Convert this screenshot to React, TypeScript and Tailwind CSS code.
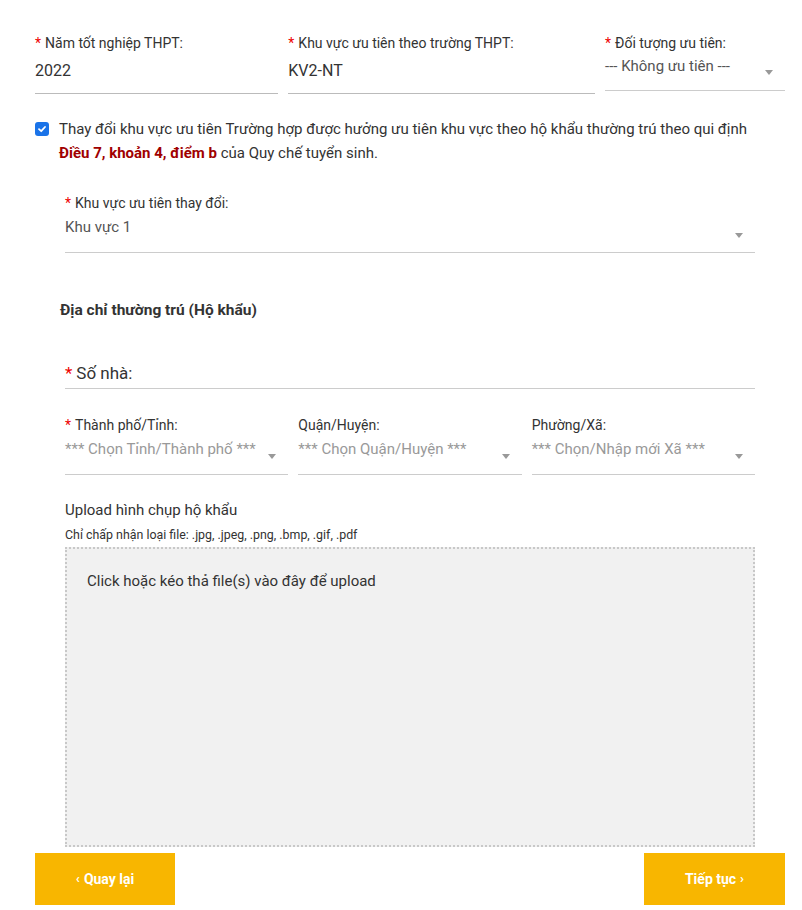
import React from "react";

const Caret = ({ className = "" }: { className?: string }) => (
  <span
    className={`absolute w-0 h-0 border-l-[4px] border-r-[4px] border-t-[5px] border-l-transparent border-r-transparent border-t-[#999] ${className}`}
  />
);

const Req = () => <span className="text-[#e00] mr-[4px]">*</span>;

export default function App() {
  return (
    <div
      className="w-full h-screen overflow-hidden bg-white text-[#333]"
      style={{ fontFamily: "Roboto, 'Noto Sans', sans-serif" }}
    >
      <div className="pl-[30px] pr-[12px] pt-[33px]">
        {/* Row 1 */}
        <div className="flex">
          <div className="w-4/12 px-[5px]">
            <div className="text-[14px] leading-[20px] text-[#333]">
              <Req />Năm tốt nghiệp THPT:
            </div>
            <div className="h-[41px] border-b border-[#bbb] pt-[6px] text-[16px] leading-[24px] text-[#333]">
              2022
            </div>
          </div>
          <div className="w-5/12 px-[5px]">
            <div className="text-[14px] leading-[20px] text-[#333]">
              <Req />Khu vực ưu tiên theo trường THPT:
            </div>
            <div className="h-[41px] border-b border-[#bbb] pt-[6px] text-[16px] leading-[24px] text-[#333]">
              KV2-NT
            </div>
          </div>
          <div className="w-3/12 px-[5px]">
            <div className="text-[14px] leading-[20px] text-[#333]">
              <Req />Đối tượng ưu tiên:
            </div>
            <div className="relative h-[38px] border-b border-[#ccc] pt-[1px] text-[15px] leading-[24px] text-[#555]">
              --- Không ưu tiên ---
              <Caret className="right-[12px] top-[17px]" />
            </div>
          </div>
        </div>

        {/* Checkbox */}
        <div className="flex px-[5px] mt-[23px]">
          <div className="mt-[5px] w-[14px] h-[14px] shrink-0 rounded-[3px] bg-[#1a73e8] flex items-center justify-center">
            <svg width="10" height="10" viewBox="0 0 10 10">
              <path d="M2 5.2 L4.2 7.2 L8 3" stroke="white" strokeWidth="1.8" fill="none" strokeLinecap="round" strokeLinejoin="round" />
            </svg>
          </div>
          <div className="ml-[10px] text-[15px] leading-[24px] text-[#333]">
            Thay đổi khu vực ưu tiên Trường hợp được hưởng ưu tiên khu vực theo hộ khẩu thường trú theo qui định{" "}
            <span className="font-bold text-[#a00000] whitespace-nowrap">Điều 7, khoản 4, điểm b</span> của Quy chế tuyển sinh.
          </div>
        </div>

        {/* Indented section */}
        <div className="pl-[35px] pr-[35px] mt-[28px]">
          <div className="text-[14px] leading-[20px] text-[#333]">
            <Req />Khu vực ưu tiên thay đổi:
          </div>
          <div className="relative h-[40px] border-b border-[#ccc] pt-[2px] text-[15px] leading-[24px] text-[#555]">
            Khu vực 1
            <Caret className="right-[12px] top-[20px]" />
          </div>

          <div className="-ml-[5px] mt-[47px] text-[15.5px] leading-[20px] font-bold text-[#333]">
            Địa chỉ thường trú (Hộ khẩu)
          </div>

          <div className="mt-[41px] h-[28px] border-b border-[#ccc] text-[17px] leading-[24px] text-[#333]">
            <Req />Số nhà:
          </div>

          <div className="mt-[26px] grid grid-cols-3 gap-[10px]">
            <div>
              <div className="text-[14px] leading-[20px] text-[#333]">
                <Req />Thành phố/Tỉnh:
              </div>
              <div className="relative h-[40px] border-b border-[#ccc] pt-[2px] text-[15px] leading-[24px] text-[#999]">
                *** Chọn Tỉnh/Thành phố ***
                <Caret className="right-[12px] top-[19px]" />
              </div>
            </div>
            <div>
              <div className="text-[14px] leading-[20px] text-[#333]">Quận/Huyện:</div>
              <div className="relative h-[40px] border-b border-[#ccc] pt-[2px] text-[15px] leading-[24px] text-[#999]">
                *** Chọn Quận/Huyện ***
                <Caret className="right-[12px] top-[19px]" />
              </div>
            </div>
            <div>
              <div className="text-[14px] leading-[20px] text-[#333]">Phường/Xã:</div>
              <div className="relative h-[40px] border-b border-[#ccc] pt-[2px] text-[15px] leading-[24px] text-[#999]">
                *** Chọn/Nhập mới Xã ***
                <Caret className="right-[12px] top-[19px]" />
              </div>
            </div>
          </div>

          <div className="mt-[24px] text-[15px] leading-[22px] text-[#333]">Upload hình chụp hộ khẩu</div>
          <div className="mt-[6px] text-[12.4px] leading-[16px] text-[#333]">
            Chỉ chấp nhận loại file: .jpg, .jpeg, .png, .bmp, .gif, .pdf
          </div>
          <div className="mt-[4px] h-[300px] bg-[#f1f1f1] border-2 border-dotted border-[#c8c8c8] pl-[20px] pt-[22px] text-[15px] leading-[20px] text-[#333]">
            Click hoặc kéo thả file(s) vào đây để upload
          </div>
        </div>

        {/* Buttons */}
        <div className="flex justify-between px-[5px] mt-[6px]">
          <button className="w-[140px] h-[52px] bg-[#f8b600] text-white font-bold text-[14px] flex items-center justify-center gap-[4px]">
            <span className="text-[13px]">‹</span> Quay lại
          </button>
          <button className="w-[141px] h-[52px] bg-[#f8b600] text-white font-bold text-[14px] flex items-center justify-center gap-[4px]">
            Tiếp tục <span className="text-[13px]">›</span>
          </button>
        </div>
      </div>
    </div>
  );
}
